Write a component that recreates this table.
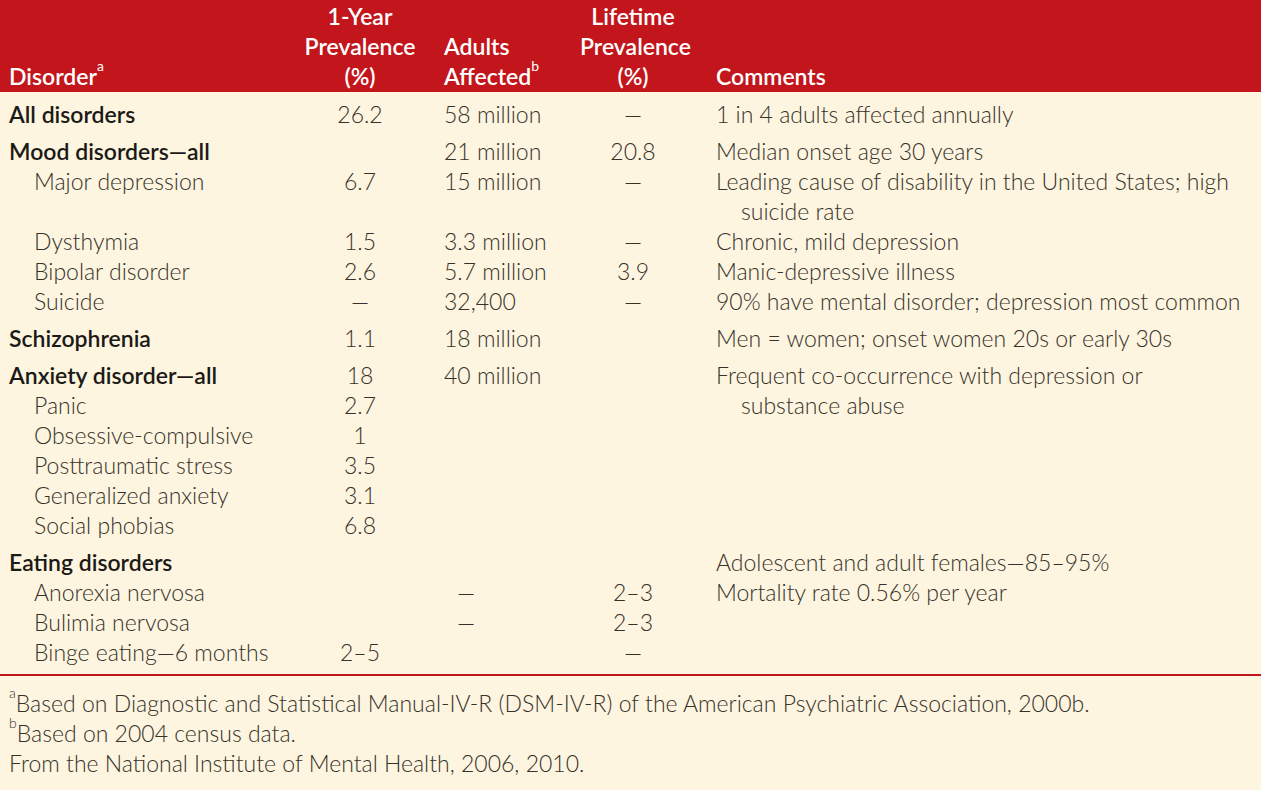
import React from "react";

type Row = {
  name: string;
  bold?: boolean;
  prev?: string;
  adults?: string;
  life?: string;
  comment?: string[];
  contIndent?: boolean;
};

const rows: Row[] = [
  { name: "All disorders", bold: true, prev: "26.2", adults: "58 million", life: "—", comment: ["1 in 4 adults affected annually"] },
  { name: "Mood disorders—all", bold: true, adults: "21 million", life: "20.8", comment: ["Median onset age 30 years"] },
  { name: "Major depression", prev: "6.7", adults: "15 million", life: "—", comment: ["Leading cause of disability in the United States; high", "suicide rate"] },
  { name: "Dysthymia", prev: "1.5", adults: "3.3 million", life: "—", comment: ["Chronic, mild depression"] },
  { name: "Bipolar disorder", prev: "2.6", adults: "5.7 million", life: "3.9", comment: ["Manic-depressive illness"] },
  { name: "Suicide", prev: "—", adults: "32,400", life: "—", comment: ["90% have mental disorder; depression most common"] },
  { name: "Schizophrenia", bold: true, prev: "1.1", adults: "18 million", comment: ["Men = women; onset women 20s or early 30s"] },
  { name: "Anxiety disorder—all", bold: true, prev: "18", adults: "40 million", comment: ["Frequent co-occurrence with depression or"] },
  { name: "Panic", prev: "2.7", comment: ["substance abuse"], contIndent: true },
  { name: "Obsessive-compulsive", prev: "1" },
  { name: "Posttraumatic stress", prev: "3.5" },
  { name: "Generalized anxiety", prev: "3.1" },
  { name: "Social phobias", prev: "6.8" },
  { name: "Eating disorders", bold: true, comment: ["Adolescent and adult females—85–95%"] },
  { name: "Anorexia nervosa", adults: "—", life: "2–3", comment: ["Mortality rate 0.56% per year"] },
  { name: "Bulimia nervosa", adults: "—", life: "2–3" },
  { name: "Binge eating—6 months", prev: "2–5", life: "—" },
];

const cols = "grid grid-cols-[300px_120px_160px_106px_1fr]";

function DataRow({ r }: { r: Row }) {
  const adultsDash = r.adults === "—";
  return (
    <div className={`${cols} ${r.bold ? "pt-[7px]" : ""} leading-[30px]`}>
      <div className={r.bold ? "pl-[9px] font-semibold text-[#1c1a16]" : "pl-[34px]"}>{r.name}</div>
      <div className="text-center">{r.prev}</div>
      <div className={adultsDash ? "pl-[37px]" : "pl-[24px]"}>{r.adults}</div>
      <div className="text-center">{r.life}</div>
      <div className={r.contIndent ? "pl-[55px]" : "pl-[30px]"}>
        {r.comment?.map((c, i) => (
          <div key={i} className={i > 0 ? "pl-[25px] whitespace-nowrap" : "whitespace-nowrap"}>
            {c}
          </div>
        ))}
      </div>
    </div>
  );
}

export default function App() {
  return (
    <div
      className="w-[1261px] h-[790px] bg-[#fdf5e0] text-[#36322a] text-[23px] font-light overflow-hidden"
      style={{ fontFamily: "Lato, 'Open Sans', sans-serif" }}
    >
      <div className={`${cols} bg-[#c3161c] text-white font-semibold h-[92px] items-end leading-[30px] pb-[1px]`}>
        <div className="pl-[9px]">
          Disorder<sup className="text-[14px] align-[7px] font-normal">a</sup>
        </div>
        <div className="text-center">
          1-Year
          <br />
          Prevalence
          <br />
          (%)
        </div>
        <div className="pl-[24px]">
          Adults
          <br />
          Affected<sup className="text-[14px] align-[7px] font-normal">b</sup>
        </div>
        <div className="text-center">
          Lifetime
          <br />
          Prevalence
          <br />
          (%)
        </div>
        <div className="pl-[30px]">Comments</div>
      </div>
      <div className="pb-[7px]">
        {rows.map((r, i) => (
          <DataRow key={i} r={r} />
        ))}
      </div>
      <div className="h-[2px] bg-[#c3161c]" />
      <div className="pt-[12px] pl-[9px] leading-[30px]">
        <div>
          <sup className="text-[14px] align-[7px]">a</sup>Based on Diagnostic and Statistical Manual-IV-R (DSM-IV-R) of the American Psychiatric Association, 2000b.
        </div>
        <div>
          <sup className="text-[14px] align-[7px]">b</sup>Based on 2004 census data.
        </div>
        <div>From the National Institute of Mental Health, 2006, 2010.</div>
      </div>
    </div>
  );
}
